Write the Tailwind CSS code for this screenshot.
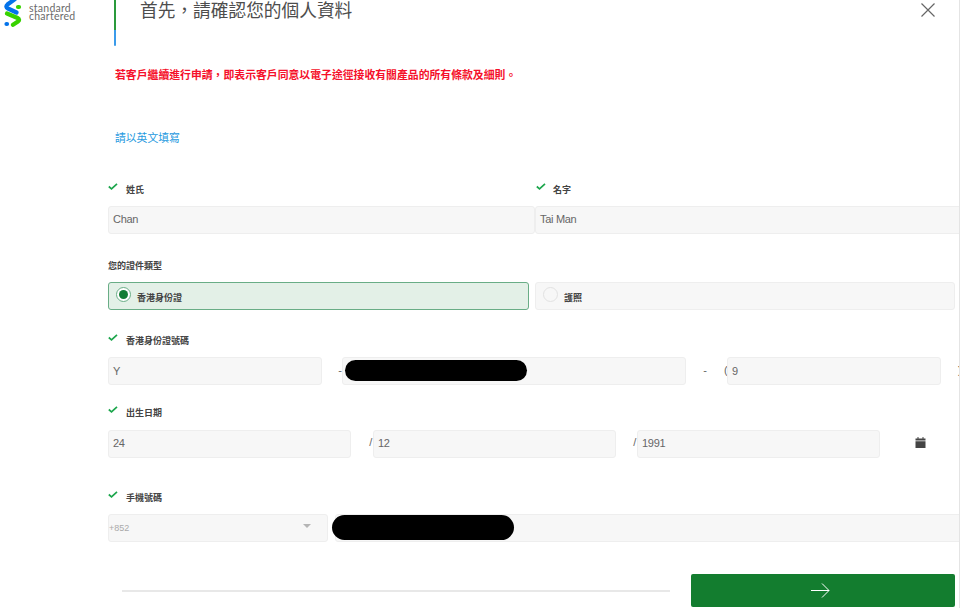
<!doctype html>
<html lang="zh-Hant">
<head>
  <meta charset="UTF-8" />
  <meta name="viewport" content="width=device-width, initial-scale=1.0" />
  <title>Standard Chartered</title>
  <script src="https://cdn.jsdelivr.net/npm/@tailwindcss/browser@4"></script>
</head>
<body class="bg-white text-[#333] font-['Liberation_Sans','Noto_Sans_CJK_TC',sans-serif]">
  <div class="flex w-[960px] h-[608px] overflow-hidden border-r border-[#e4e4e4]">

    <!-- Logo -->
    <div class="w-[108px] shrink-0 flex items-start pl-1 gap-[7px]">
      <svg class="w-[18px] h-[27px] shrink-0" viewBox="0 0 18 27">
        <path d="M11 -1 L3.500 4.500 C1.800 6 2 7.500 4 8.500 L12.500 12.500" fill="none" stroke="#0473ea" stroke-width="4.200" stroke-linecap="round"/>
        <path d="M15 7 L14 7" fill="none" stroke="#38d200" stroke-width="4.200" stroke-linecap="round"/>
        <path d="M3 13.500 L13.500 18 C15.500 19 15.500 20.500 14 21.500 L9 24.800" fill="none" stroke="#38d200" stroke-width="4.200" stroke-linecap="round"/>
        <path d="M2.500 24 L3 24" fill="none" stroke="#0473ea" stroke-width="4.200" stroke-linecap="round"/>
      </svg>
      <div class="mt-[3px] text-[10.500px] leading-[8px] pt-[1px] text-[#6b6b6b] font-['Lato',sans-serif] tracking-[0.25px]">standard<br />chartered</div>
    </div>

    <!-- Main -->
    <div class="w-[852px] shrink-0">

      <!-- Header -->
      <div class="flex h-[46px] ml-[6px] relative">
        <div class="w-[2px] h-full rounded-b-sm bg-gradient-to-b from-[#2a9a3c] from-[65%] to-[#3b9bea] to-[65%]"></div>
        <h1 class="ml-6 text-[17.700px] leading-[22px] font-normal text-[#4d4d4d]">首先，請確認您的個人資料</h1>
        <svg class="absolute left-[807px] top-[3px] w-[14px] h-[14px]" viewBox="0 0 14 14">
          <path d="M0.500 0.500 L13.500 13.500 M13.500 0.500 L0.500 13.500" stroke="#666" stroke-width="1.200" fill="none"/>
        </svg>
      </div>

      <p class="ml-[7px] mt-[22px] text-[10.850px] leading-[14px] font-bold text-[#f5102a]">若客戶繼續進行申請，即表示客戶同意以電子途徑接收有關產品的所有條款及細則。</p>
      <p class="ml-[7px] mt-[49px] text-[10.800px] leading-[14px] text-[#1f9ae0]">請以英文填寫</p>

      <!-- Names -->
      <div class="flex mt-[37px]">
        <div class="w-[427px]">
          <div class="flex items-start h-[21px]">
            <svg class="w-[10px] h-[7px] mt-[1px]" viewBox="0 0 10 7"><path d="M0.800 3.500 L3.500 5.800 L9 0.800" fill="none" stroke="#1ca64c" stroke-width="1.700"/></svg>
            <span class="ml-[8px] mt-[2px] text-[9px] leading-[12px] font-bold text-[#444]">姓氏</span>
          </div>
          <div class="h-[28px] mt-[3px] bg-[#f7f7f7] border border-[#eeeeee] rounded-[3px] pl-1 text-[11px] leading-[25px] tracking-[-0.3px] text-[#666]">Chan</div>
        </div>
        <div class="flex-1">
          <div class="flex items-start h-[21px]">
            <svg class="w-[10px] h-[7px] mt-[1px] ml-[1px]" viewBox="0 0 10 7"><path d="M0.800 3.500 L3.500 5.800 L9 0.800" fill="none" stroke="#1ca64c" stroke-width="1.700"/></svg>
            <span class="ml-[7px] mt-[2px] text-[9px] leading-[12px] font-bold text-[#444]">名字</span>
          </div>
          <div class="h-[28px] mt-[3px] bg-[#f7f7f7] border border-[#eeeeee] rounded-l-[3px] pl-1 text-[11px] leading-[25px] tracking-[-0.3px] text-[#666]">Tai Man</div>
        </div>
      </div>

      <!-- ID type -->
      <p class="mt-[26px] text-[9px] leading-[12px] font-bold text-[#444]">您的證件類型</p>
      <div class="flex mt-[10px] h-[28px]">
        <div class="w-[421px] bg-[#e3f0e7] border border-[#69ad86] rounded-[3px] flex items-start pl-[7px] pt-[4px]">
          <div class="w-[15px] h-[15px] rounded-full border border-[#69ad86] bg-white flex items-center justify-center">
            <div class="w-[9px] h-[9px] rounded-full bg-[#137d35]"></div>
          </div>
          <span class="ml-[6px] mt-[5px] text-[9px] leading-[12px] font-bold text-[#444]">香港身份證</span>
        </div>
        <div class="ml-[6px] w-[420px] bg-[#f7f7f7] border border-[#eeeeee] rounded-[3px] flex items-start pl-[7px] pt-[4px]">
          <div class="w-[15px] h-[15px] rounded-full border border-[#e2e2e2] bg-[#f7f7f7]"></div>
          <span class="ml-[6px] mt-[5px] text-[9px] leading-[12px] font-bold text-[#444]">護照</span>
        </div>
      </div>

      <!-- HKID -->
      <div class="flex items-start h-[21px] mt-[23px]">
        <svg class="w-[10px] h-[7px] mt-[1px]" viewBox="0 0 10 7"><path d="M0.800 3.500 L3.500 5.800 L9 0.800" fill="none" stroke="#1ca64c" stroke-width="1.700"/></svg>
        <span class="ml-[8px] mt-[2px] text-[9px] leading-[12px] font-bold text-[#444]">香港身份證號碼</span>
      </div>
      <div class="flex h-[28px] mt-[3px] text-[11px] leading-[26px] text-[#666]">
        <div class="w-[214px] shrink-0 bg-[#f7f7f7] border border-[#eeeeee] rounded-[3px] pl-1">Y</div>
        <div class="w-[20px] shrink-0 text-right">-</div>
        <div class="relative w-[344px] shrink-0 bg-[#f7f7f7] border border-[#eeeeee] rounded-[3px]">
          <div class="absolute left-[2px] top-[2px] w-[182px] h-[21px] rounded-full bg-black"></div>
        </div>
        <div class="w-[38px] shrink-0 text-center">-</div>
        <div class="w-[3px] shrink-0">(</div>
        <div class="w-[214px] shrink-0 bg-[#f7f7f7] border border-[#eeeeee] rounded-[3px] pl-1">9</div>
        <div class="ml-[17px] shrink-0 text-[#444]">)</div>
      </div>

      <!-- Birth date -->
      <div class="flex items-start h-[21px] mt-[20px]">
        <svg class="w-[10px] h-[7px] mt-[1px]" viewBox="0 0 10 7"><path d="M0.800 3.500 L3.500 5.800 L9 0.800" fill="none" stroke="#1ca64c" stroke-width="1.700"/></svg>
        <span class="ml-[8px] mt-[2px] text-[9px] leading-[12px] font-bold text-[#444]">出生日期</span>
      </div>
      <div class="flex h-[28px] mt-[4px] text-[11px] leading-[25px] tracking-[-0.3px] text-[#666]">
        <div class="w-[243px] bg-[#f7f7f7] border border-[#eeeeee] rounded-[3px] pl-1">24</div>
        <div class="w-[22px] text-right pr-[1px]">/</div>
        <div class="w-[243px] bg-[#f7f7f7] border border-[#eeeeee] rounded-[3px] pl-1">12</div>
        <div class="w-[21px] text-right pr-[1px]">/</div>
        <div class="w-[243px] bg-[#f7f7f7] border border-[#eeeeee] rounded-[3px] pl-1">1991</div>
        <svg class="ml-[35px] mt-[7px] w-[11px] h-[11px]" viewBox="0 0 11 11">
          <path d="M0.500 1.500 H2.500 V0 H3.500 V1.500 H7.500 V0 H8.500 V1.500 H10.500 V3.500 H0.500 Z M0.500 4.300 H10.500 V11 H0.500 Z" fill="#444"/>
        </svg>
      </div>

      <!-- Mobile -->
      <div class="flex items-start h-[21px] mt-[32px]">
        <svg class="w-[10px] h-[7px] mt-[1px]" viewBox="0 0 10 7"><path d="M0.800 3.500 L3.500 5.800 L9 0.800" fill="none" stroke="#1ca64c" stroke-width="1.700"/></svg>
        <span class="ml-[8px] mt-[2px] text-[9px] leading-[12px] font-bold text-[#444]">手機號碼</span>
      </div>
      <div class="flex h-[28px] mt-[3px]">
        <div class="relative w-[220px] bg-[#f7f7f7] border border-[#eeeeee] rounded-[3px] text-[9px] leading-[26px] text-[#aaa]">+852
          <div class="absolute left-[194px] top-[9px] w-0 h-0 border-l-[4px] border-r-[4px] border-t-[4px] border-l-transparent border-r-transparent border-t-[#b5b5b5]"></div>
        </div>
        <div class="relative ml-[7px] flex-1 bg-[#f7f7f7] border border-[#eeeeee] rounded-l-[3px]">
          <div class="absolute left-[-4px] top-[0px] w-[182px] h-[25px] rounded-full bg-black"></div>
        </div>
      </div>

      <!-- Footer -->
      <div class="flex items-center mt-[32px]">
        <div class="ml-[14px] w-[548px] h-[2px] bg-[#e8e8e8]"></div>
        <button class="ml-[21px] w-[264px] h-[33px] rounded-[2px] bg-[#137d2f] flex items-center justify-center">
          <svg class="w-[19px] h-[15px] mr-[6px]" viewBox="0 0 19 15">
            <path d="M0 7.500 H18 M11 0.500 L18 7.500 L11 14.500" fill="none" stroke="#fff" stroke-width="1"/>
          </svg>
        </button>
      </div>
    </div>
  </div>
</body>
</html>
